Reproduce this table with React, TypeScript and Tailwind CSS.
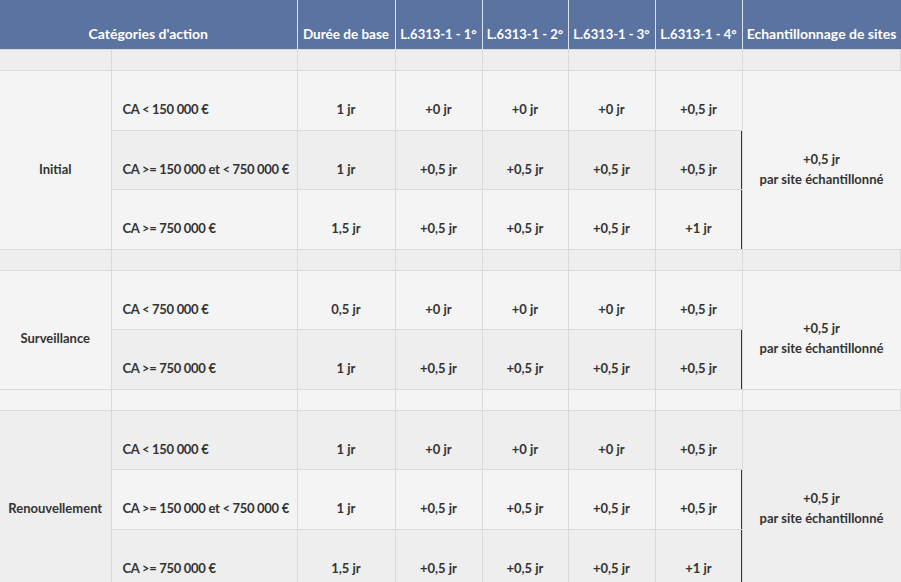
const font = { fontFamily: "Lato, 'Open Sans', sans-serif" };

type Row = { ca: string; base: string; l1: string; l2: string; l3: string; l4: string };

type Group = { name: string; rows: Row[] };

const groups: Group[] = [
  {
    name: "Initial",
    rows: [
      { ca: "CA < 150 000 €", base: "1 jr", l1: "+0 jr", l2: "+0 jr", l3: "+0 jr", l4: "+0,5 jr" },
      { ca: "CA >= 150 000 et < 750 000 €", base: "1 jr", l1: "+0,5 jr", l2: "+0,5 jr", l3: "+0,5 jr", l4: "+0,5 jr" },
      { ca: "CA >= 750 000 €", base: "1,5 jr", l1: "+0,5 jr", l2: "+0,5 jr", l3: "+0,5 jr", l4: "+1 jr" },
    ],
  },
  {
    name: "Surveillance",
    rows: [
      { ca: "CA < 750 000 €", base: "0,5 jr", l1: "+0 jr", l2: "+0 jr", l3: "+0 jr", l4: "+0,5 jr" },
      { ca: "CA >= 750 000 €", base: "1 jr", l1: "+0,5 jr", l2: "+0,5 jr", l3: "+0,5 jr", l4: "+0,5 jr" },
    ],
  },
  {
    name: "Renouvellement",
    rows: [
      { ca: "CA < 150 000 €", base: "1 jr", l1: "+0 jr", l2: "+0 jr", l3: "+0 jr", l4: "+0,5 jr" },
      { ca: "CA >= 150 000 et < 750 000 €", base: "1 jr", l1: "+0,5 jr", l2: "+0,5 jr", l3: "+0,5 jr", l4: "+0,5 jr" },
      { ca: "CA >= 750 000 €", base: "1,5 jr", l1: "+0,5 jr", l2: "+0,5 jr", l3: "+0,5 jr", l4: "+1 jr" },
    ],
  },
];

const td = "border border-[#dadada] pt-[28px] pb-[10.5px] leading-[20px] px-1 text-center whitespace-nowrap";
const th = "border border-x-[#dde2ea] border-b-[#dadada] border-t-0 pt-[24px] pb-[5px] leading-[20px] px-1 text-center font-bold text-white whitespace-nowrap";

export default function App() {
  // striped rows: odd tr gets the darker grey, rowspan cells keep their first row's colour
  let idx = 0;
  const stripe = () => (idx++ % 2 === 0 ? "bg-[#eeeeee]" : "bg-[#f4f4f4]");

  const body: React.ReactNode[] = [];
  groups.forEach((g, gi) => {
    body.push(
      <tr key={"sp" + gi} className={stripe()}>
        <td className="border border-[#dadada] border-l-0 h-[21px] p-0" />
        {Array.from({ length: 7 }).map((_, k) => (
          <td key={k} className="border border-[#dadada] h-[21px] p-0" />
        ))}
      </tr>,
    );
    g.rows.forEach((r, ri) => {
      body.push(
        <tr key={g.name + ri} className={stripe()}>
          {ri === 0 && (
            <td rowSpan={g.rows.length} className={td + " border-l-0"}>
              {g.name}
            </td>
          )}
          <td className={td + " text-left pl-[11px] tracking-[-0.3px]"}>{r.ca}</td>
          <td className={td}>{r.base}</td>
          <td className={td}>{r.l1}</td>
          <td className={td}>{r.l2}</td>
          <td className={td}>{r.l3}</td>
          <td className={td + (ri > 0 ? " shadow-[inset_-1px_0_0_#333333]" : "")}>{r.l4}</td>
          {ri === 0 && (
            <td rowSpan={g.rows.length} className={td + " border-r-0"}>
              +0,5 jr
              <br />
              par site échantillonné
            </td>
          )}
        </tr>,
      );
    });
  });

  return (
    <div className="w-[901px] h-[582px] overflow-hidden bg-white text-[13px] text-[#333333]" style={font}>
      <table className="w-[901px] table-fixed border-collapse">
        <colgroup>
          <col className="w-[111px]" />
          <col className="w-[186px]" />
          <col className="w-[98px]" />
          <col className="w-[87px]" />
          <col className="w-[86px]" />
          <col className="w-[87px]" />
          <col className="w-[87px]" />
          <col />
        </colgroup>
        <thead>
          <tr className="bg-[#5b73a0]">
            <th colSpan={2} className={th + " border-l-0 text-[14px]"}>
              Catégories d'action
            </th>
            <th className={th + " text-[13.5px]"}>Durée de base</th>
            <th className={th}>L.6313-1 - 1°</th>
            <th className={th}>L.6313-1 - 2°</th>
            <th className={th}>L.6313-1 - 3°</th>
            <th className={th}>L.6313-1 - 4°</th>
            <th className={th + " border-r-0 text-[14px]"}>Echantillonnage de sites</th>
          </tr>
        </thead>
        <tbody className="font-bold">{body}</tbody>
      </table>
    </div>
  );
}
